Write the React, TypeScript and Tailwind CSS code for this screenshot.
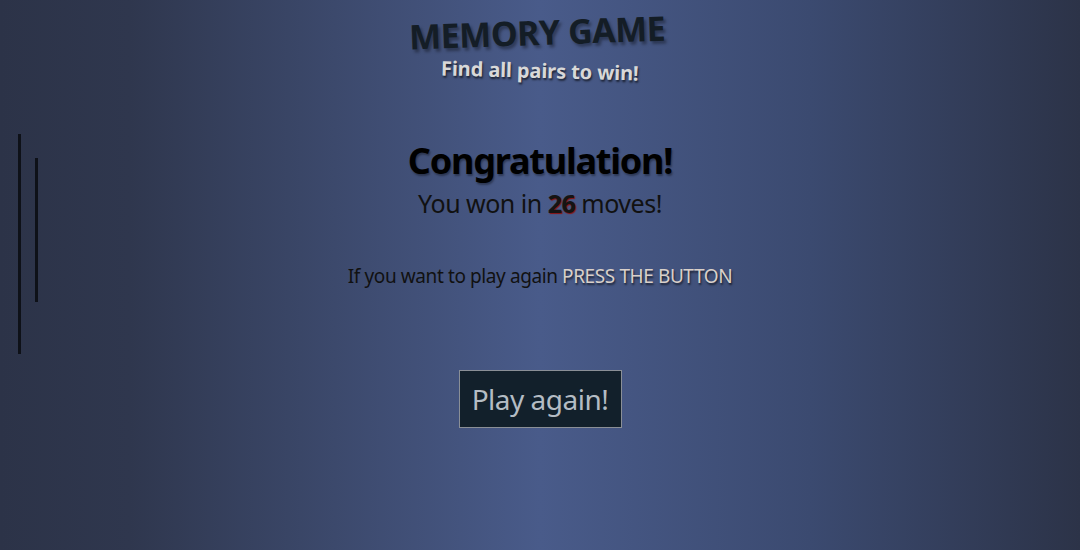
export default function App() {
  return (
    <div
      className="relative h-[550px] w-full overflow-hidden bg-[linear-gradient(to_right,#2c3348_0%,#2f374e_12%,#495b8a_50%,#3b4a70_75%,#2c3348_100%)] text-center"
      style={{ fontFamily: '"Noto Sans", "Open Sans", sans-serif' }}
    >
      {/* leftover card edges */}
      <div className="absolute left-[18px] top-[134px] h-[220px] w-[3px] bg-[#0e1118]" />
      <div className="absolute left-[35px] top-[158px] h-[144px] w-[3px] bg-[#0e1118]" />

      <header className="flex flex-col items-center pt-[15px]">
        <h1 className="-translate-x-[3px] -rotate-2 text-[34px] font-bold leading-[34px] tracking-[-0.5px] text-[#141d26] [text-shadow:2px_3px_3px_rgba(0,0,0,0.35)]">
          MEMORY GAME
        </h1>
        <p className="mt-[10px] rotate-[1.5deg] text-[20px] font-bold leading-[24px] tracking-[-0.1px] text-[#d8d8d8] [text-shadow:1px_2px_2px_rgba(0,0,0,0.6)]">
          Find all pairs to win!
        </p>
      </header>

      <section className="mt-[55px] flex flex-col items-center">
        <h2 className="text-[36px] font-bold leading-[46px] tracking-[-1.2px] text-black [text-shadow:1px_2px_2px_rgba(0,0,0,0.35)]">
          Congratulation!
        </h2>
        <p className="mt-[4px] text-[25px] leading-[30px] tracking-[-0.5px] text-[#111]">
          You won in{' '}
          <span className="font-bold text-[#141414] [text-shadow:1px_1px_1px_#8a1010]">26</span>{' '}
          moves!
        </p>
        <p className="mt-[46px] text-[19px] leading-[24px] tracking-[-0.4px] text-[#111]">
          If you want to play again{' '}
          <span className="text-[#d9d0c9] [text-shadow:1px_2px_2px_rgba(0,0,0,0.6)]">PRESS THE BUTTON</span>
        </p>
        <button className="mt-[82px] h-[58px] w-[163px] border border-[#8a8f96] bg-[#12202b] text-[28px] tracking-[-0.5px] text-[#b4bcc4]">
          Play again!
        </button>
      </section>
    </div>
  )
}
